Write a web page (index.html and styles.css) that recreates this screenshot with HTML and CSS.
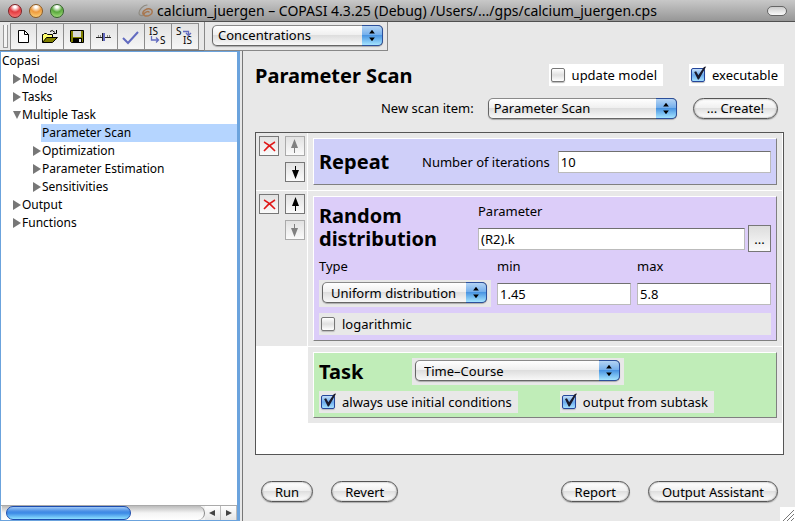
FILE: index.html
```html
<!DOCTYPE html>
<html lang="en">
<head>
<meta charset="utf-8">
<title>calcium_juergen – COPASI 4.3.25 (Debug)</title>
<link rel="stylesheet" href="styles.css">
</head>
<body>
<header class="titlebar">
  <div class="lights">
    <button class="light red" aria-label="Close"></button>
    <button class="light amber" aria-label="Minimize"></button>
    <button class="light green" aria-label="Zoom"></button>
  </div>
  <div class="window-title">
    <svg width="16" height="14" viewBox="0 0 16 14" fill="none" stroke-linecap="round">
      <path d="M9 1C5 1 1 6 1 9c0 3 3 3 5 2" stroke="#8e8a80" stroke-width="1.2"/>
      <path d="M5 10c-1-3 4-6 7-5s3 4 0 6-7 1-6-1 4-3 5-2" stroke="#a8764e" stroke-width="1.5"/>
    </svg>
    <span>calcium_juergen – COPASI 4.3.25 (Debug) /Users/.../gps/calcium_juergen.cps</span>
  </div>
  <button class="pill-toggle" aria-label="Toggle toolbar"></button>
</header>

<nav class="toolbar">
  <div class="tools">
    <span class="handle"></span>
    <button class="tool" aria-label="New"><svg width="26" height="26" viewBox="0 0 26 26"><path d="M7.500 6.500h6l4 4v8h-10z" fill="#fff" stroke="#000"/><path d="M13.500 6.500v4h4" fill="none" stroke="#000"/></svg></button>
    <button class="tool" aria-label="Open"><svg width="26" height="26" viewBox="0 0 26 26"><path d="M5.500 18.500v-8h1l1-1h2l1 1h5v3" fill="#ffff70" stroke="#000"/><path d="M5.500 18.500l4-5h11l-5 5z" fill="#808000" stroke="#000"/><path d="M13 7.500q2-2.500 5 1M19.500 6v3.500H16" fill="none" stroke="#000"/></svg></button>
    <button class="tool" aria-label="Save"><svg width="26" height="26" viewBox="0 0 26 26"><path d="M6.500 6.500h13v12h-12l-1-1z" fill="#808000" stroke="#000"/><path d="M9 7h8v6H9z" fill="#d8d8d8"/><path d="M9 14h9v5H9z" fill="#000"/><path d="M15 15h2v3h-2z" fill="#eee"/></svg></button>
    <button class="tool" aria-label="Sliders"><svg width="26" height="26" viewBox="0 0 26 26"><path d="M5 13.500h15" stroke="#222"/><path d="M7.500 11v2M9.500 11v2M16.500 11v2M18.500 11v2" stroke="#888"/><path d="M11.500 9v8" stroke="#222"/><path d="M12 9h2v8h-2z" fill="#6269c0"/></svg></button>
    <button class="tool" aria-label="Check"><svg width="26" height="26" viewBox="0 0 26 26"><path d="M5 14l5 5L20 8" fill="none" stroke="#626bc0" stroke-width="2"/></svg></button>
    <button class="tool" aria-label="Initial state to state"><svg width="26" height="26" viewBox="0 0 26 26"><text x="4" y="11">IS</text><text x="15" y="20">S</text><path d="M6.500 12v4h7M11 13.500l2.500 2.500-2.500 2.500" fill="none" stroke="#626bc0" stroke-width="1.300"/></svg></button>
    <button class="tool" aria-label="State to initial state"><svg width="26" height="26" viewBox="0 0 26 26"><text x="4" y="11">S</text><text x="11" y="20">IS</text><path d="M11 7.500h5.500v4M14 9l2.500 2.500L19 9" fill="none" stroke="#626bc0" stroke-width="1.300"/></svg></button>
  </div>
  <div class="unit-bar">
    <span class="popup raised">
      <select aria-label="Units"><option>Concentrations</option></select>
      <svg class="arrows" viewBox="0 0 21 20"><path d="M7.500 8h6l-3-4zM7.500 12h6l-3 4z"/></svg>
    </span>
  </div>
</nav>

<div class="workspace">
  <aside class="sidebar">
    <ul class="tree">
      <li class="node">Copasi</li>
      <li class="node l1"><i class="tri"></i>Model</li>
      <li class="node l1"><i class="tri"></i>Tasks</li>
      <li class="node l1"><i class="tri open"></i>Multiple Task</li>
      <li class="node l2 selected"><span>Parameter Scan</span></li>
      <li class="node l2"><i class="tri"></i>Optimization</li>
      <li class="node l2"><i class="tri"></i>Parameter Estimation</li>
      <li class="node l2"><i class="tri"></i>Sensitivities</li>
      <li class="node l1"><i class="tri"></i>Output</li>
      <li class="node l1"><i class="tri"></i>Functions</li>
    </ul>
    <div class="scrollbar">
      <div class="track"><div class="thumb"></div></div>
      <button class="step" aria-label="Scroll left"><svg width="16" height="14"><path d="M10 4v6L4 7z"/></svg></button>
      <button class="step" aria-label="Scroll right"><svg width="16" height="14"><path d="M5 4v6l6-3z"/></svg></button>
    </div>
  </aside>

  <main class="content">
    <div class="head">
      <h1>Parameter Scan</h1>
      <label class="check white"><input type="checkbox">update model</label>
      <label class="check white"><input type="checkbox" checked>executable</label>
    </div>
    <div class="new-item">
      <label for="new-scan">New scan item:</label>
      <span class="popup raised">
        <select id="new-scan"><option>Parameter Scan</option></select>
        <svg class="arrows" viewBox="0 0 21 20"><path d="M7.500 8h6l-3-4zM7.500 12h6l-3 4z"/></svg>
      </span>
      <button class="aqua">... Create!</button>
    </div>

    <section class="scan-list">
      <div class="controls">
        <button class="mini" aria-label="Delete"><svg viewBox="0 0 18 18"><path d="M4 5q6 3 11 9M15 5Q8 9 4 14" fill="none" stroke="#e01818" stroke-width="1.500"/></svg></button>
        <button class="mini" aria-label="Move up" disabled><svg viewBox="0 0 18 18"><path d="M8.500 2L12 11H5zM8 10h1v6H8z"/></svg></button>
        <button class="mini down" aria-label="Move down"><svg viewBox="0 0 18 18"><path d="M9.500 16L6 7h7zM9 3h1v6H9z"/></svg></button>
      </div>
      <div class="cell">
        <div class="panel repeat">
          <h2>Repeat</h2>
          <label for="iterations">Number of iterations</label>
          <input class="field" id="iterations" type="text" value="10">
        </div>
      </div>

      <div class="controls">
        <button class="mini" aria-label="Delete"><svg viewBox="0 0 18 18"><path d="M4 5q6 3 11 9M15 5Q8 9 4 14" fill="none" stroke="#e01818" stroke-width="1.500"/></svg></button>
        <button class="mini" aria-label="Move up"><svg viewBox="0 0 18 18"><path d="M9.500 2L13 11H6zM9 10h1v6H9z"/></svg></button>
        <button class="mini down" aria-label="Move down" disabled><svg viewBox="0 0 18 18"><path d="M8.500 16L5 7h7zM8 3h1v6H8z"/></svg></button>
      </div>
      <div class="cell">
        <div class="panel random">
          <div class="random-top">
            <h2>Random distribution</h2>
            <div class="parameter">
              <label for="parameter">Parameter</label>
              <input class="field" id="parameter" type="text" value="(R2).k">
              <button class="browse" aria-label="Choose parameter">...</button>
            </div>
          </div>
          <div class="range">
            <label for="dist">Type</label>
            <label for="min">min</label>
            <label for="max">max</label>
            <span class="well">
              <span class="popup">
                <select id="dist"><option>Uniform distribution</option></select>
                <svg class="arrows" viewBox="0 0 21 20"><path d="M7.500 8h6l-3-4zM7.500 12h6l-3 4z"/></svg>
              </span>
            </span>
            <input class="field" id="min" type="text" value="1.45">
            <input class="field" id="max" type="text" value="5.8">
          </div>
          <label class="check"><input type="checkbox">logarithmic</label>
        </div>
      </div>

      <div class="cell task-cell">
        <div class="panel task">
          <div class="task-top">
            <h2>Task</h2>
            <span class="well">
              <span class="popup">
                <select aria-label="Task"><option>Time–Course</option></select>
                <svg class="arrows" viewBox="0 0 21 20"><path d="M7.500 8h6l-3-4zM7.500 12h6l-3 4z"/></svg>
              </span>
            </span>
          </div>
          <div class="task-options">
            <label class="check"><input type="checkbox" checked>always use initial conditions</label>
            <label class="check"><input type="checkbox" checked>output from subtask</label>
          </div>
        </div>
      </div>
    </section>

    <footer class="actions">
      <button class="aqua">Run</button>
      <button class="aqua">Revert</button>
      <button class="aqua push">Report</button>
      <button class="aqua">Output Assistant</button>
    </footer>
    <svg class="grip" width="15" height="14" viewBox="0 0 15 14"><path d="M0 0h15v14H0z" fill="#fff"/><path d="M3 14L14 3M7 14l7-7M11 14l3-3" stroke="#777"/></svg>
  </main>
</div>
</body>
</html>
```
FILE: styles.css
```css
* { box-sizing: border-box; }

body {
  margin: 0;
  height: 100vh;
  display: flex;
  flex-direction: column;
  overflow: hidden;
  background: #e8e8e8;
  color: #000;
  font: 13px/18px "Noto Sans", "Open Sans", sans-serif;
}

button, input, select { font: inherit; color: inherit; margin: 0; }
button { padding: 0; }
h1, h2 { margin: 0; font-size: 20px; line-height: 23px; font-weight: 700; }

/* Title bar */
.titlebar {
  display: flex;
  align-items: center;
  flex: none;
  height: 22px;
  padding: 0 8px;
  background: linear-gradient(#c8c8c8, #969696);
  border-bottom: 1px solid #505050;
}
.lights { display: flex; gap: 7px; width: 60px; }
.light { width: 14px; height: 14px; border: 1px solid #555; border-radius: 50%; }
.red { background: radial-gradient(circle at 50% 15%, #fff 0 10%, #e33b40 45%, #ff8a85); border-color: #7d2226; }
.amber { background: radial-gradient(circle at 50% 15%, #fff 0 10%, #ee9a3c 45%, #ffe08a); border-color: #8a5a24; }
.green { background: radial-gradient(circle at 50% 15%, #fff 0 10%, #59a83c 45%, #b8ec90); border-color: #33602a; }
.window-title {
  flex: 1;
  display: flex;
  align-items: center;
  justify-content: center;
  gap: 3px;
  font-size: 14px;
  white-space: nowrap;
}
.pill-toggle {
  width: 20px;
  height: 10px;
  margin-left: 40px;
  border: 1px solid #666;
  border-radius: 5px;
  background: linear-gradient(#ccc, #fafafa);
}

/* Toolbar */
.toolbar { display: flex; flex: none; height: 29px; }
.tools {
  display: flex;
  width: 204px;
  padding-top: 1px;
  border-bottom: 1px solid #777;
}
.handle { width: 5px; margin: 2px 2px 2px 3px; border: solid #999; border-width: 0 1px 1px; background: #f4f4f4; }
.tool {
  width: 27px;
  border: 1px solid #8c8c8c;
  border-left-width: 0;
  background: linear-gradient(#e2e2e2, #f6f6f6);
}
.handle + .tool { width: 27px; border-left-width: 1px; }
.tool svg { display: block; }
.tool text { font: 10px "Noto Sans", sans-serif; }
.unit-bar {
  width: 184px;
  padding: 3px 4px 0 7px;
  border: 1px solid #888;
  border-top: 0;
}

/* Pop-up menus */
.popup { position: relative; display: block; }
.popup select {
  appearance: none;
  display: block;
  width: 100%;
  height: 21px;
  padding: 0 24px 0 8px;
  border: 1px solid #666;
  border-top-color: #8a8a8a;
  border-radius: 5px;
  background: linear-gradient(#fff, #f0f0f0 45%, #dedede 50%, #f8f8f8);
  box-shadow: 0 1px 1px #aaa;
  line-height: 18px;
}
.popup.raised select { padding: 0 24px 4px 5px; }
.arrows {
  position: absolute;
  top: 0;
  right: 0;
  width: 21px;
  height: 21px;
  border: 1px solid #2c4f9a;
  border-left: 0;
  border-radius: 0 5px 5px 0;
  background: linear-gradient(#b4d4f4, #76b0ec 45%, #4a95e2 50%, #a4e4ff);
  pointer-events: none;
}
.well { display: block; padding: 2px 4px 4px 3px; background: #e8e8e8; }

/* Sidebar */
.workspace { flex: 1; display: flex; min-height: 0; }
.sidebar {
  display: flex;
  flex-direction: column;
  width: 240px;
  flex: none;
  background: #fff;
  border: 1px solid #6ba3dd;
  border-right-width: 3px;
}
.tree { flex: 1; margin: 0; padding: 0; list-style: none; font-size: 12px; }
.node { display: flex; align-items: center; height: 18px; padding-left: 1px; white-space: nowrap; }
.l1 { padding-left: 12px; }
.l2 { padding-left: 32px; }
.selected { padding-left: 40px; }
.selected span { flex: 1; padding-left: 1px; background: #b5d5ff; }
.tri { width: 8px; height: 10px; margin-right: 1px; background: #777; clip-path: polygon(0 0, 100% 50%, 0 100%); }
.tri.open { clip-path: polygon(0 10%, 100% 10%, 50% 90%); }
.scrollbar { display: flex; height: 15px; padding-left: 1px; background: #f2f2f2; border-top: 1px solid #aaa; }
.track { flex: 1; padding-left: 4px; border-radius: 0 7px 7px 0; background: linear-gradient(#bbb, #f4f4f4 50%, #fff); border-right: 1px solid #888; }
.thumb {
  width: 63%;
  height: 14px;
  border: 1px solid #1c4cae;
  border-radius: 7px;
  background: linear-gradient(#a0c8f6, #4a90e6 35%, #3c8ae6 50%, #8ce0ff);
}
.step { width: 16px; border: 0; border-right: 1px solid #bbb; background: linear-gradient(#fff, #e6e6e6); }
.step svg { display: block; fill: #444; }

/* Content */
.content {
  position: relative;
  flex: 1;
  display: flex;
  flex-direction: column;
  margin-left: 2px;
  padding: 13px 11px 19px 12px;
  border-left: 1px solid #777;
}
.head { display: flex; align-items: center; gap: 26px; height: 22px; }
.head h1 { flex: 1; }
.check {
  display: flex;
  align-items: center;
  gap: 7px;
  height: 22px;
  padding: 0 6px 0 2px;
  background: #e8e8e8;
  white-space: nowrap;
}
.check.white { background: #fff; }
.check input {
  appearance: none;
  position: relative;
  width: 14px;
  height: 14px;
  border: 1px solid #777;
  border-radius: 2px;
  background: linear-gradient(#fff, #e0e0e0 50%, #fff);
  box-shadow: 0 1px 1px #bbb;
}
.check input:checked { border-color: #24459a; background: linear-gradient(#c4defa, #6cabec 50%, #a4e0ff); }
.check input:checked::after {
  content: "";
  position: absolute;
  left: 1px;
  top: -3px;
  width: 14px;
  height: 14px;
  background: #1a1a2c;
  clip-path: polygon(8% 42%, 22% 38%, 38% 66%, 78% 8%, 94% 4%, 42% 96%, 34% 96%);
}
.new-item { display: flex; align-items: center; justify-content: flex-end; height: 22px; margin: 11px 6px 13px 0; }
.new-item label { margin-right: 14px; }
.new-item .popup { width: 189px; margin-right: 16px; }

.aqua {
  height: 21px;
  padding: 0 13px;
  border: 1px solid #555;
  border-radius: 11px;
  background: linear-gradient(#fff, #f0f0f0 45%, #dfdfdf 50%, #fff);
  box-shadow: 0 1px 1px #aaa, inset 0 0 2px #888;
  line-height: 18px;
  white-space: nowrap;
}

/* Scan items */
.scan-list {
  flex: 1;
  display: grid;
  grid-template-columns: 51px 1fr;
  grid-template-rows: 57px 155px 76px;
  gap: 1px;
  padding-right: 1px;
  align-content: start;
  border: 1px solid #555;
  background: #fff;
}
.controls {
  display: grid;
  grid-template-columns: 20px 20px;
  grid-auto-rows: 20px;
  gap: 6px;
  padding: 3px;
  background: #e8e8e8;
}
.down { grid-column: 2; }
.mini { border: 1px solid #777; background: linear-gradient(#e2e2e2, #fafafa); }
.mini svg { display: block; }
.mini:disabled { border-color: #aaa; fill: #808080; }
.cell { padding: 5px; background: #e8e8e8; }
.task-cell { grid-column: 2; }
.panel {
  height: 100%;
  padding: 5px;
  border: 1px solid #fff;
  border-right-color: #808080;
  border-bottom-color: #808080;
}
.field {
  width: 100%;
  min-width: 0;
  height: 22px;
  padding: 0 2px;
  border: 1px solid #bbb;
  border-top-color: #707070;
  border-radius: 0;
  background: #fff;
}
.repeat { display: flex; align-items: center; background: #cfcff9; }
.repeat h2 { width: 103px; flex: none; }
.repeat label { margin-right: 8px; white-space: nowrap; }
.repeat .field { flex: 1; }
.random { background: #dccdf9; }
.random-top { display: grid; grid-template-columns: 159px 1fr; align-items: center; }
.random-top h2 { width: 130px; }
.parameter { display: grid; grid-template-columns: 1fr 23px; column-gap: 3px; align-items: center; }
.parameter label { grid-column: 1 / 3; height: 23px; }
.browse { height: 27px; border: 1px solid #777; background: linear-gradient(#ddd, #fafafa); }
.range {
  display: grid;
  grid-template-columns: 172px 1fr 1fr;
  column-gap: 6px;
  row-gap: 5px;
  align-items: center;
  margin: 5px 0 6px;
}
.task { background: #c0edb8; }
.task-top { display: flex; align-items: center; margin-bottom: 6px; }
.task-top h2 { width: 93px; }
.task-top .well { width: 212px; }
.task-options { display: flex; gap: 42px; }

.actions { display: flex; gap: 18px; margin: 26px 6px 0; }
.push { margin-left: auto; }
.grip { position: absolute; right: 0; bottom: 0; }
```
